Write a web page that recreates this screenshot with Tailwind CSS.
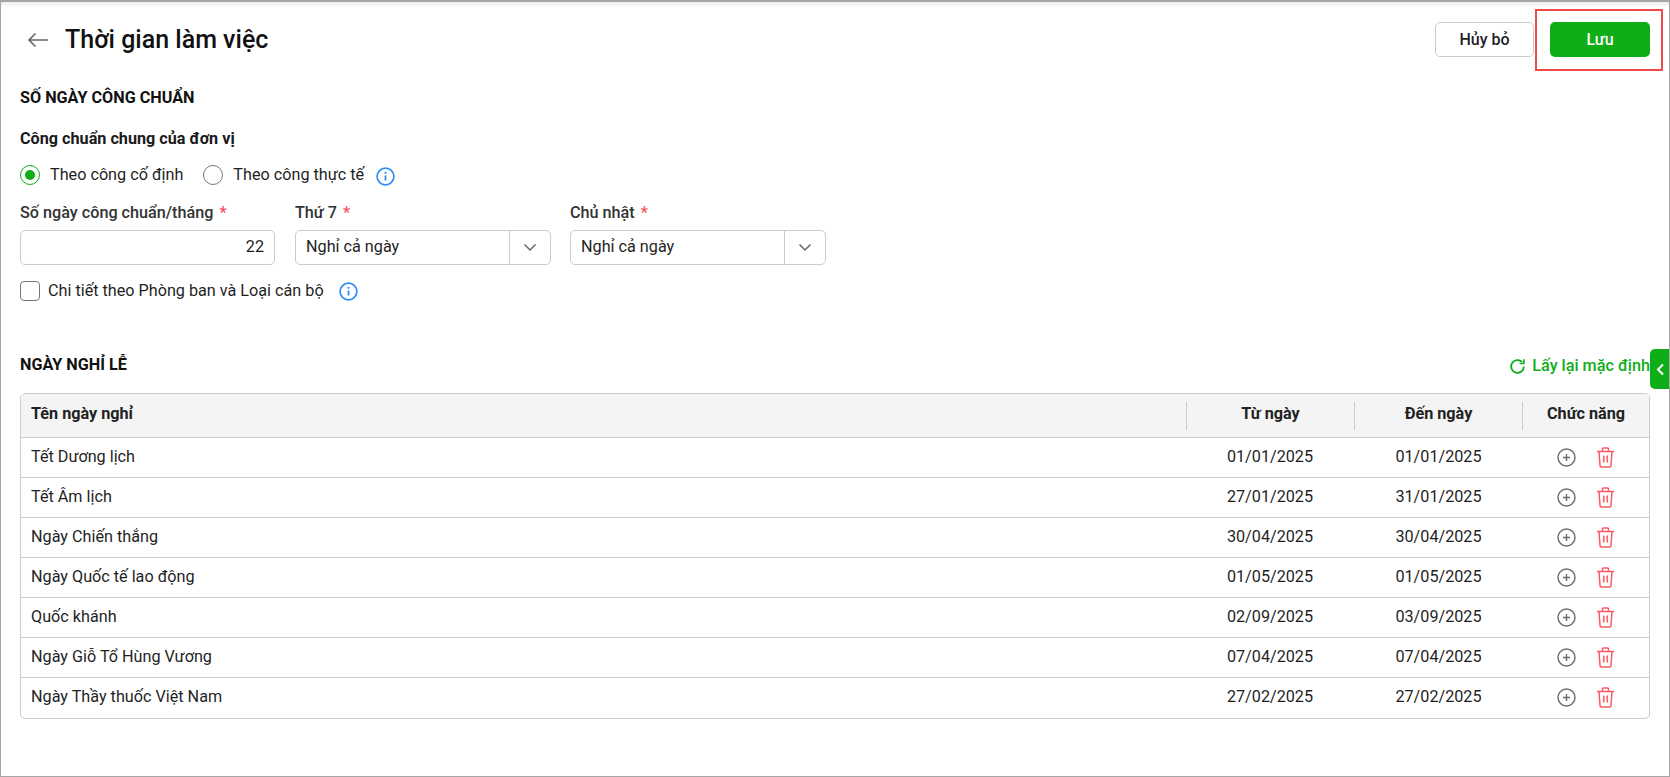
<!DOCTYPE html>
<html lang="vi"><head><meta charset="utf-8"><title>Thời gian làm việc</title>
<script src="https://cdn.jsdelivr.net/npm/@tailwindcss/browser@4"></script></head>
<body class="m-0 bg-white overflow-hidden">
<div class="relative w-[1670px] h-[777px] border border-t-2 border-[#a6a6a6] px-[19px] font-['Roboto',sans-serif] text-[16.2px] text-[#1f1f1f] overflow-hidden">
  <div class="absolute inset-x-0 top-0 h-[6px] bg-gradient-to-b from-[#ececec] to-white"></div>
  <header class="relative flex items-center justify-between h-[35px] mt-[20px]">
    <div class="flex items-center">
      <svg class="ml-[7px] mr-[16px] mt-[1px]" width="22" height="16" viewBox="0 0 22 16" fill="none" stroke="#666" stroke-width="1.6"><path d="M21 8H2M8.500 1.500 2 8l6.500 6.500"/></svg>
      <h1 class="text-[25px] leading-[35px] font-medium text-[#111] pb-[1px]">Thời gian làm việc</h1>
    </div>
    <div class="flex gap-[16px]">
      <button class="w-[99px] h-[35px] rounded-[5px] border border-[#ccc] bg-white font-medium text-[16px] text-[#1f1f1f]">Hủy bỏ</button>
      <button class="w-[100px] h-[35px] rounded-[5px] bg-[#0fad18] font-medium text-[16px] text-white">Lưu</button>
    </div>
  </header>
  <div class="absolute left-[1534px] top-[7px] w-[128px] h-[62px] border-2 border-[#f04a4f]"></div>

  <h2 class="mt-[29px] leading-[24px] font-bold text-[#111]">SỐ NGÀY CÔNG CHUẨN</h2>
  <h3 class="mt-[17px] leading-[24px] font-bold text-[#1a1a1a]">Công chuẩn chung của đơn vị</h3>
  <div class="flex items-center h-[24px] mt-[12px]">
    <span class="flex items-center justify-center w-[20px] h-[20px] rounded-full border border-[#0fad18]"><span class="w-[10px] h-[10px] rounded-full bg-[#0fad18]"></span></span>
    <span class="ml-[10px]">Theo công cố định</span>
    <span class="ml-[20px] w-[20px] h-[20px] rounded-full border border-[#777]"></span>
    <span class="ml-[10px]">Theo công thực tế</span>
    <svg class="ml-[12px] mt-[2px]" width="19" height="19" viewBox="0 0 19 19" fill="none"><circle cx="9.500" cy="9.500" r="8.400" stroke="#2f8cf5" stroke-width="1.700"/><path d="M9.500 8.500v5" stroke="#2f8cf5" stroke-width="1.800"/><circle cx="9.500" cy="5.800" r="1.100" fill="#2f8cf5"/></svg>
  </div>
  <div class="flex mt-[14px]">
    <div class="w-[255px]">
      <label class="block leading-[24px] font-medium text-[#333]">Số ngày công chuẩn/tháng <span class="text-[#f6505a] ml-[2px]">*</span></label>
      <div class="mt-[5px] h-[35px] rounded-[5px] border border-[#ccc] flex items-center justify-end px-[10px]">22</div>
    </div>
    <div class="w-[256px] ml-[20px]">
      <label class="block leading-[24px] font-medium text-[#333]">Thứ 7 <span class="text-[#f6505a] ml-[2px]">*</span></label>
      <div class="mt-[5px] h-[35px] rounded-[5px] border border-[#ccc] flex items-center">
        <span class="flex-1 pl-[10px]">Nghỉ cả ngày</span>
        <span class="w-[41px] h-full border-l border-[#ccc] flex items-center justify-center"><svg width="14" height="9" viewBox="0 0 14 9" fill="none" stroke="#666" stroke-width="1.500"><path d="M1.500 1.500 7 7l5.500-5.500"/></svg></span>
      </div>
    </div>
    <div class="w-[256px] ml-[19px]">
      <label class="block leading-[24px] font-medium text-[#333]">Chủ nhật <span class="text-[#f6505a] ml-[2px]">*</span></label>
      <div class="mt-[5px] h-[35px] rounded-[5px] border border-[#ccc] flex items-center">
        <span class="flex-1 pl-[10px]">Nghỉ cả ngày</span>
        <span class="w-[41px] h-full border-l border-[#ccc] flex items-center justify-center"><svg width="14" height="9" viewBox="0 0 14 9" fill="none" stroke="#666" stroke-width="1.500"><path d="M1.500 1.500 7 7l5.500-5.500"/></svg></span>
      </div>
    </div>
  </div>
  <div class="flex items-center h-[24px] mt-[14px]">
    <span class="w-[20px] h-[20px] rounded-[4px] border border-[#777]"></span>
    <span class="ml-[8px]">Chi tiết theo Phòng ban và Loại cán bộ</span>
    <svg class="ml-[15px] mt-[1px]" width="19" height="19" viewBox="0 0 19 19" fill="none"><circle cx="9.500" cy="9.500" r="8.400" stroke="#2f8cf5" stroke-width="1.700"/><path d="M9.500 8.500v5" stroke="#2f8cf5" stroke-width="1.800"/><circle cx="9.500" cy="5.800" r="1.100" fill="#2f8cf5"/></svg>
  </div>

  <div class="flex items-center justify-between h-[24px] mt-[50px]">
    <h2 class="font-bold text-[#111]">NGÀY NGHỈ LỄ</h2>
    <div class="flex items-center font-medium text-[#0fad18] mt-[2px]">
      <svg class="mr-[6px]" width="17" height="17" viewBox="0 0 17 17" fill="none" stroke="#0fad18" stroke-width="1.800"><path d="M14.900 8.500a6.400 6.400 0 1 1-1.900-4.600"/><path d="M14.900 1.200v4.300h-4.300" stroke-width="1.600"/></svg>
      Lấy lại mặc định
    </div>
  </div>
  <div class="absolute left-[1649px] top-[347px] w-[20px] h-[40px] rounded-l-[5px] bg-[#0fad18] flex items-center justify-center">
    <svg width="9" height="13" viewBox="0 0 9 13" fill="none" stroke="#fff" stroke-width="2"><path d="M7 1.500 2 6.500l5 5"/></svg>
  </div>

  <div class="mt-[16px] rounded-[5px] border border-[#ccc] overflow-hidden">
    <div class="flex h-[44px] bg-[#f4f4f4] font-bold text-[#222] items-center border-b border-[#ccc]">
      <div class="w-[1165px] pl-[10px] pb-[2px]">Tên ngày nghỉ</div>
      <div class="w-[168px] h-[28px] pb-[2px] flex items-center justify-center border-l border-[#ccc]">Từ ngày</div>
      <div class="w-[168px] h-[28px] pb-[2px] flex items-center justify-center border-l border-[#ccc]">Đến ngày</div>
      <div class="flex-1 h-[28px] pb-[2px] flex items-center justify-center border-l border-[#ccc]">Chức năng</div>
    </div>
    <div id="rows" class="divide-y divide-[#ccc]">
      <div class="flex h-[40px] pb-[1px] items-center"><div class="w-[1165px] pl-[10px]">Tết Dương lịch</div><div class="w-[168px] text-center">01/01/2025</div><div class="w-[168px] pl-[1px] text-center">01/01/2025</div><div class="flex-1 flex items-center justify-center gap-[20px] pl-[1px]"><svg width="19" height="19" viewBox="0 0 19 19" fill="none" stroke="#6b6b6b" stroke-width="1.400"><circle cx="9.500" cy="9.500" r="8.500"/><path d="M9.500 6v7M6 9.500h7"/></svg><svg width="19" height="21" viewBox="0 0 19 21" fill="none" stroke="#fb5a60" stroke-width="1.500"><path d="M1 4.500h17M3 4.500l1 14a1.500 1.500 0 0 0 1.500 1.500h8a1.500 1.500 0 0 0 1.500-1.500l1-14M6.500 4.500V2a1 1 0 0 1 1-1h4a1 1 0 0 1 1 1v2.500M7.800 8.500v7M11.200 8.500v7"/></svg></div></div>
      <div class="flex h-[40px] pb-[1px] items-center"><div class="w-[1165px] pl-[10px]">Tết Âm lịch</div><div class="w-[168px] text-center">27/01/2025</div><div class="w-[168px] pl-[1px] text-center">31/01/2025</div><div class="flex-1 flex items-center justify-center gap-[20px] pl-[1px]"><svg width="19" height="19" viewBox="0 0 19 19" fill="none" stroke="#6b6b6b" stroke-width="1.400"><circle cx="9.500" cy="9.500" r="8.500"/><path d="M9.500 6v7M6 9.500h7"/></svg><svg width="19" height="21" viewBox="0 0 19 21" fill="none" stroke="#fb5a60" stroke-width="1.500"><path d="M1 4.500h17M3 4.500l1 14a1.500 1.500 0 0 0 1.500 1.500h8a1.500 1.500 0 0 0 1.500-1.500l1-14M6.500 4.500V2a1 1 0 0 1 1-1h4a1 1 0 0 1 1 1v2.500M7.800 8.500v7M11.200 8.500v7"/></svg></div></div>
      <div class="flex h-[40px] pb-[1px] items-center"><div class="w-[1165px] pl-[10px]">Ngày Chiến thắng</div><div class="w-[168px] text-center">30/04/2025</div><div class="w-[168px] pl-[1px] text-center">30/04/2025</div><div class="flex-1 flex items-center justify-center gap-[20px] pl-[1px]"><svg width="19" height="19" viewBox="0 0 19 19" fill="none" stroke="#6b6b6b" stroke-width="1.400"><circle cx="9.500" cy="9.500" r="8.500"/><path d="M9.500 6v7M6 9.500h7"/></svg><svg width="19" height="21" viewBox="0 0 19 21" fill="none" stroke="#fb5a60" stroke-width="1.500"><path d="M1 4.500h17M3 4.500l1 14a1.500 1.500 0 0 0 1.500 1.500h8a1.500 1.500 0 0 0 1.500-1.500l1-14M6.500 4.500V2a1 1 0 0 1 1-1h4a1 1 0 0 1 1 1v2.500M7.800 8.500v7M11.200 8.500v7"/></svg></div></div>
      <div class="flex h-[40px] pb-[1px] items-center"><div class="w-[1165px] pl-[10px]">Ngày Quốc tế lao động</div><div class="w-[168px] text-center">01/05/2025</div><div class="w-[168px] pl-[1px] text-center">01/05/2025</div><div class="flex-1 flex items-center justify-center gap-[20px] pl-[1px]"><svg width="19" height="19" viewBox="0 0 19 19" fill="none" stroke="#6b6b6b" stroke-width="1.400"><circle cx="9.500" cy="9.500" r="8.500"/><path d="M9.500 6v7M6 9.500h7"/></svg><svg width="19" height="21" viewBox="0 0 19 21" fill="none" stroke="#fb5a60" stroke-width="1.500"><path d="M1 4.500h17M3 4.500l1 14a1.500 1.500 0 0 0 1.500 1.500h8a1.500 1.500 0 0 0 1.500-1.500l1-14M6.500 4.500V2a1 1 0 0 1 1-1h4a1 1 0 0 1 1 1v2.500M7.800 8.500v7M11.200 8.500v7"/></svg></div></div>
      <div class="flex h-[40px] pb-[1px] items-center"><div class="w-[1165px] pl-[10px]">Quốc khánh</div><div class="w-[168px] text-center">02/09/2025</div><div class="w-[168px] pl-[1px] text-center">03/09/2025</div><div class="flex-1 flex items-center justify-center gap-[20px] pl-[1px]"><svg width="19" height="19" viewBox="0 0 19 19" fill="none" stroke="#6b6b6b" stroke-width="1.400"><circle cx="9.500" cy="9.500" r="8.500"/><path d="M9.500 6v7M6 9.500h7"/></svg><svg width="19" height="21" viewBox="0 0 19 21" fill="none" stroke="#fb5a60" stroke-width="1.500"><path d="M1 4.500h17M3 4.500l1 14a1.500 1.500 0 0 0 1.500 1.500h8a1.500 1.500 0 0 0 1.500-1.500l1-14M6.500 4.500V2a1 1 0 0 1 1-1h4a1 1 0 0 1 1 1v2.500M7.800 8.500v7M11.200 8.500v7"/></svg></div></div>
      <div class="flex h-[40px] pb-[1px] items-center"><div class="w-[1165px] pl-[10px]">Ngày Giỗ Tổ Hùng Vương</div><div class="w-[168px] text-center">07/04/2025</div><div class="w-[168px] pl-[1px] text-center">07/04/2025</div><div class="flex-1 flex items-center justify-center gap-[20px] pl-[1px]"><svg width="19" height="19" viewBox="0 0 19 19" fill="none" stroke="#6b6b6b" stroke-width="1.400"><circle cx="9.500" cy="9.500" r="8.500"/><path d="M9.500 6v7M6 9.500h7"/></svg><svg width="19" height="21" viewBox="0 0 19 21" fill="none" stroke="#fb5a60" stroke-width="1.500"><path d="M1 4.500h17M3 4.500l1 14a1.500 1.500 0 0 0 1.500 1.500h8a1.500 1.500 0 0 0 1.500-1.500l1-14M6.500 4.500V2a1 1 0 0 1 1-1h4a1 1 0 0 1 1 1v2.500M7.800 8.500v7M11.200 8.500v7"/></svg></div></div>
      <div class="flex h-[40px] pb-[1px] items-center"><div class="w-[1165px] pl-[10px]">Ngày Thầy thuốc Việt Nam</div><div class="w-[168px] text-center">27/02/2025</div><div class="w-[168px] pl-[1px] text-center">27/02/2025</div><div class="flex-1 flex items-center justify-center gap-[20px] pl-[1px]"><svg width="19" height="19" viewBox="0 0 19 19" fill="none" stroke="#6b6b6b" stroke-width="1.400"><circle cx="9.500" cy="9.500" r="8.500"/><path d="M9.500 6v7M6 9.500h7"/></svg><svg width="19" height="21" viewBox="0 0 19 21" fill="none" stroke="#fb5a60" stroke-width="1.500"><path d="M1 4.500h17M3 4.500l1 14a1.500 1.500 0 0 0 1.500 1.500h8a1.500 1.500 0 0 0 1.500-1.500l1-14M6.500 4.500V2a1 1 0 0 1 1-1h4a1 1 0 0 1 1 1v2.500M7.800 8.500v7M11.200 8.500v7"/></svg></div></div>
    </div>
  </div>
</div>
</body></html>
